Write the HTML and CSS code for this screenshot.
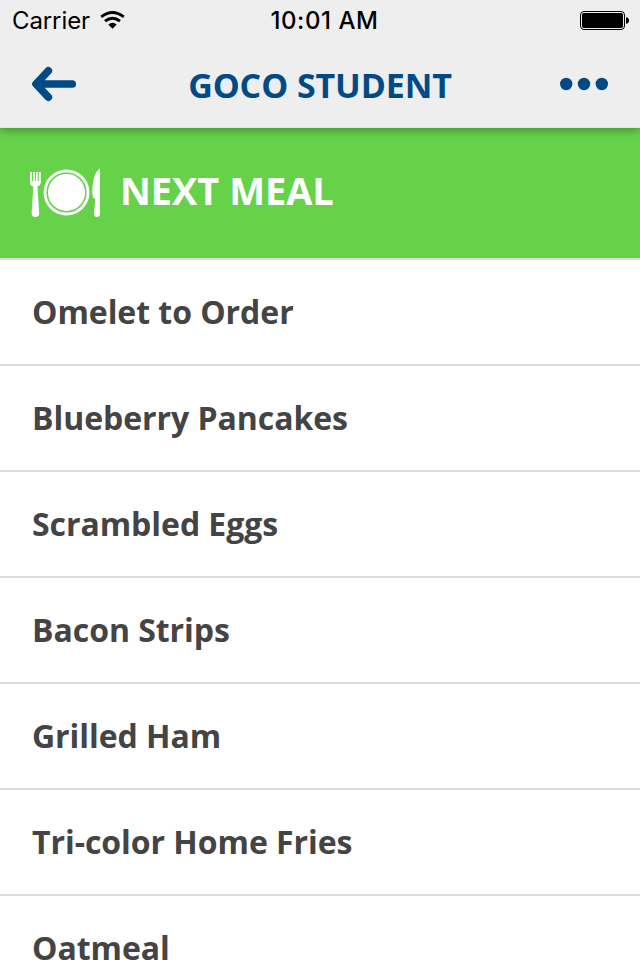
FILE: index.html
```html
<!DOCTYPE html>
<html lang="en">
<head>
<meta charset="utf-8">
<title>GOCO Student</title>
<link rel="stylesheet" href="styles.css">
</head>
<body>
<header class="top">
  <div class="status">
    <div class="carrier"><span>Carrier</span>
      <svg class="wifi" width="25" height="18" viewBox="0 0 25 18"><g fill="none" stroke="#000" stroke-width="2.900"><path d="M1.200 5.900Q12.500-2.900 23.800 5.900"/><path d="M5 10.200Q12.500 4.100 20 10.200"/></g><path d="M8.300 13.600Q12.500 10 16.700 13.600L12.500 17.800Z"/></svg>
    </div>
    <div class="time">10:01 AM</div>
    <svg class="battery" width="50" height="20" viewBox="0 0 50 20"><rect x=".5" y=".5" width="44" height="18" rx="3.500" fill="none" stroke="#000"/><rect x="2" y="2" width="41" height="15" rx="2"/><path d="M46 6.200Q49 6.500 49 9.500T46 12.800Z"/></svg>
  </div>
  <nav class="nav">
    <svg class="back" width="46" height="36" viewBox="0 0 46 36"><path d="M16.300 4.800L4 18L16.300 31.200L11 23V13Z" fill="#004b87"/><path d="M16.300 4.800L4 18L16.300 31.200M5 18H40.200" fill="none" stroke="#004b87" stroke-width="7.700" stroke-linecap="round" stroke-linejoin="round"/></svg>
    <h1>GOCO STUDENT</h1>
    <svg class="more" width="48" height="14" viewBox="0 0 48 14" fill="#004b87"><circle cx="6.200" cy="7" r="6.200"/><circle cx="24" cy="7" r="6.200"/><circle cx="41.800" cy="7" r="6.200"/></svg>
  </nav>
</header>
<section class="meal">
  <svg class="plate" width="72" height="50" viewBox="0 0 72 50" fill="#fff"><path d="M1 4H3V13H4.100V4H5.900V13H6.900V4H8.700V13H9.800V4H11.800V15Q11.500 17.700 8.500 18.500L10.200 45.500Q10 49 6.400 49T2.600 45.500L4.300 18.500Q1.200 17.700 1 15Z"/><circle cx="37.500" cy="24.500" r="23"/><circle cx="37.500" cy="24.500" r="19.300" fill="none" stroke="#65d24a" stroke-width="1.500"/><path d="M71 .3V46Q71 49 68 49T65 46L66.300 31Q63 30 63.300 23Q64 5 71 .3Z"/></svg>
  <h2>NEXT MEAL</h2>
</section>
<ul class="menu"><li>Omelet to Order</li><li>Blueberry Pancakes</li><li>Scrambled Eggs</li><li>Bacon Strips</li><li>Grilled Ham</li><li>Tri-color Home Fries</li><li>Oatmeal</li></ul>
</body>
</html>
```
FILE: styles.css
```css
* { box-sizing: border-box; }
body { margin: 0; height: 960px; overflow: hidden; background: #fff; font-family: "Open Sans", sans-serif; }
.top { position: relative; height: 128px; background: #eee; border-bottom: 1px solid #e2e2e2; box-shadow: 0 2px 9px rgba(0,0,0,.35); }
.status { display: grid; grid-template-columns: 1fr auto 1fr; align-items: center; height: 42px; padding: 0 10px 0 12px; font: 24px/42px Inter, sans-serif; }
.carrier { display: flex; align-items: center; gap: 10.5px; letter-spacing: -.1px; }
.wifi { margin-top: -2px; }
.time { font-weight: 500; letter-spacing: .55px; padding-left: 7px; }
.battery { justify-self: end; }
.nav { display: flex; align-items: center; justify-content: space-between; height: 84px; padding: 0 32px; }
h1, h2 { margin: 0; font-weight: 700; }
h1 { padding: 1px 0 0 2px; font-size: 34px; letter-spacing: -.1px; color: #004b87; }
.meal { display: flex; align-items: center; gap: 19px; height: 130px; padding-left: 29px; background: #65d24a; color: #fff; }
h2 { padding-bottom: 7px; font-size: 38px; letter-spacing: -.05px; }
.menu { margin: 0; padding: 0; list-style: none; }
li { height: 106px; padding-left: 32px; border-top: 2px solid #ddd; font-size: 32px; font-weight: 700; letter-spacing: -.05px; line-height: 104px; color: #444; }
```
